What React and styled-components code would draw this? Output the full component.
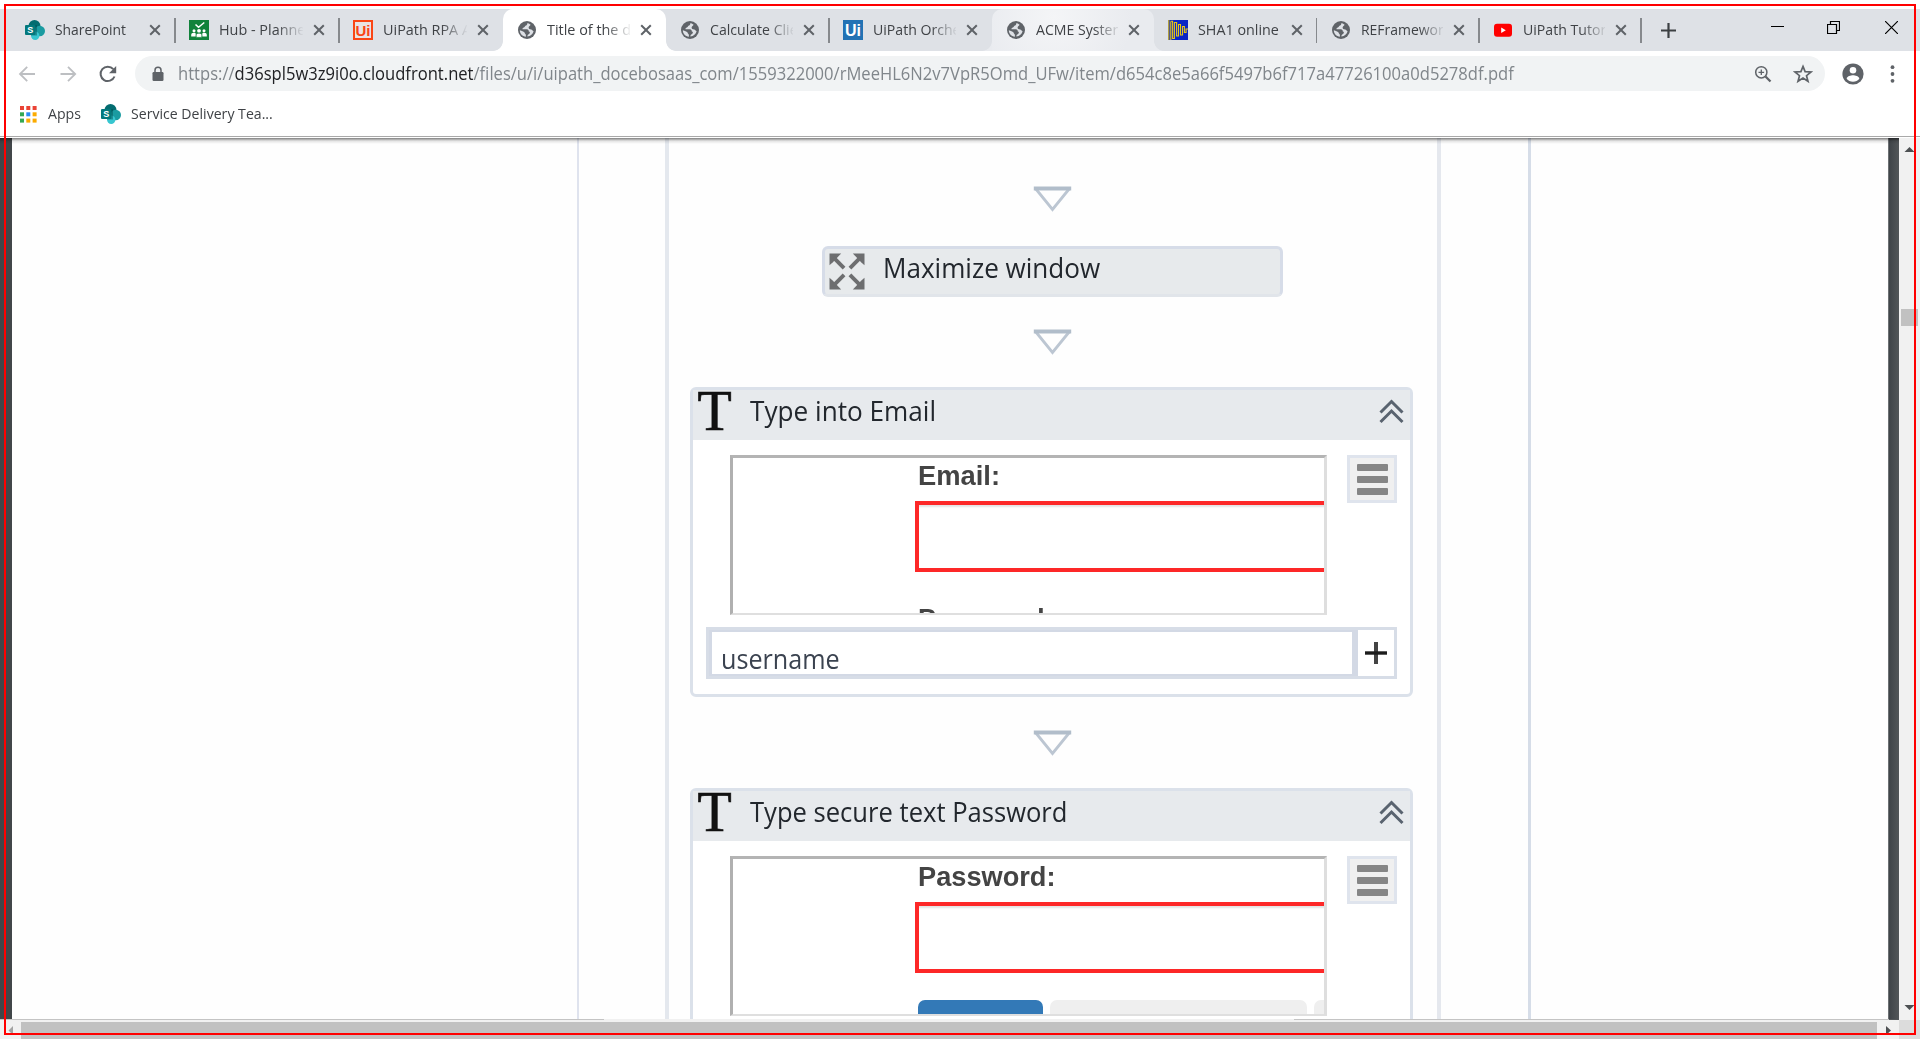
import React, { useLayoutEffect, useRef, useState } from "react";
import styled, { createGlobalStyle, css } from "styled-components";

const UI = `"Open Sans", "Noto Sans", sans-serif`;

const Global = createGlobalStyle`
  * { box-sizing: border-box; }
  html, body { margin: 0; padding: 0; overflow: hidden; }
  svg { display: block; flex: none; }
`;

/* ---------- text fitted to a given advance width ---------- */
const FitBox = styled.span`
  display: block;
  flex: none;
  width: ${(p) => p.$w}px;
  white-space: pre;
`;
const FitInner = styled.span`
  display: inline-block;
  transform-origin: 0 50%;
`;
function Fit({ w, children }) {
  const ref = useRef(null);
  const [k, setK] = useState(1);
  useLayoutEffect(() => {
    if (ref.current.offsetWidth) setK(w / ref.current.offsetWidth);
  }, [w]);
  return (
    <FitBox $w={w}>
      <FitInner ref={ref} style={{ transform: `scaleX(${k})` }}>{children}</FitInner>
    </FitBox>
  );
}

/* ---------- window ---------- */
const Window = styled.div`
  width: 1920px;
  height: 1039px;
  padding-top: 9px;
  display: flex;
  flex-direction: column;
  background: #fff;
  font-family: ${UI};
  overflow: hidden;
`;
const Frame = styled.div`
  position: absolute;
  left: 4px;
  top: 4px;
  width: 1912px;
  height: 1031px;
  border: 2px solid #f00;
  pointer-events: none;
  z-index: 10;
`;

/* ---------- tab strip ---------- */
const Strip = styled.div`
  flex: none;
  height: 42px;
  padding-left: 11px;
  display: flex;
  background: #dee1e6;
`;
const raised = (color, fill) => css`
  background: ${fill};
  border-radius: 10px 10px 0 0;
  &::before, &::after {
    content: "";
    position: absolute;
    bottom: 0;
    width: 10px;
    height: 10px;
  }
  &::before {
    left: -10px;
    background: radial-gradient(circle at 0 0, transparent 9.5px, ${color} 10.2px);
  }
  &::after {
    right: -10px;
    background: radial-gradient(circle at 100% 0, transparent 9.5px, ${color} 10.2px);
  }
`;
const TabBox = styled.div`
  position: relative;
  flex: none;
  width: ${(p) => p.$w}px;
  height: 42px;
  padding: 0 0 0 14px;
  display: flex;
  align-items: center;
  z-index: ${(p) => (p.$state ? 1 : 0)};
  ${(p) => p.$state === "active" && raised("#fff", "#fff")}
  ${(p) => p.$state === "hover" && raised("#e9ebef", "radial-gradient(circle 78px at 62px 8px, #f4f5f7, #e9ebef)")}
`;
const TabTitle = styled.div`
  width: ${(p) => p.$w - 80}px;
  margin: 0 10px 2px 10px;
  white-space: nowrap;
  font-size: 15px;
  line-height: 24px;
  color: #3f4246;
  ${(p) => p.$fade && css`mask-image: linear-gradient(90deg, #000 58px, transparent 85px);`}
`;
const TabText = styled.span`
  display: inline-block;
  transform: scaleX(${(p) => p.$k});
  transform-origin: 0 50%;
`;
const Separator = styled.i`
  width: 1.5px;
  height: 25px;
  margin-left: auto;
  margin-right: -0.5px;
  background: #86898d;
`;
const Controls = styled.div`
  display: flex;
  align-items: center;
  flex: 1;
  padding: 0 22px 6px 20px;
`;
const Push = styled.span`flex: 1;`;
const PlusWrap = styled.div`padding-top: 6px;`;
const Spacer = styled.span`flex: none; width: ${(p) => p.$w}px;`;

/* ---------- toolbar ---------- */
const Toolbar = styled.div`
  flex: none;
  height: 45px;
  padding: 0 22px 0 18px;
  display: flex;
  align-items: center;
`;
const Omnibox = styled.div`
  width: 1690px;
  height: 35px;
  margin-left: 18px;
  padding: 0 12px 0 17px;
  display: flex;
  align-items: center;
  border-radius: 18px;
  background: #f1f3f4;
`;
const Url = styled.div`
  margin: 0 0 2px 14px;
  font-size: 17.5px;
  line-height: 28px;
  color: #80868b;
`;
const Host = styled.span`color: #202124;`;

const Bookmarks = styled.div`
  flex: none;
  height: 40px;
  padding: 0 0 4px 20px;
  display: flex;
  align-items: center;
  font-size: 15px;
  line-height: 24px;
  color: #3f4246;
`;
const BookmarkLabel = styled.div`margin: 0 20px 2px ${(p) => p.$l}px;`;
const Edge = styled.div`
  flex: none;
  height: 2px;
  border-top: 1px solid #a9a9a9;
`;

/* ---------- viewer ---------- */
const Viewer = styled.div`
  position: relative;
  flex: none;
  height: 881px;
  display: flex;
  &::before {
    content: "";
    position: absolute;
    inset: 0 21px auto 0;
    height: 6px;
    background: linear-gradient(rgba(0,0,0,.5), rgba(0,0,0,.3) 25%, rgba(0,0,0,.1) 50%, transparent);
    z-index: 3;
  }
`;
const Gutter = styled.div`
  flex: none;
  width: ${(p) => p.$w}px;
  background: ${(p) => p.$bg};
`;
const Page = styled.div`
  flex: 1;
  height: 881px;
  padding-left: 565px;
  background: #fefefe;
  overflow: hidden;
`;
const Sequence = styled.div`
  width: 954px;
  height: 900px;
  padding-left: 86px;
  border-left: 2px solid #dfe3ee;
  border-right: 3px solid #d6dde8;
  filter: blur(0.7px);
`;
const Inner = styled.div`
  width: 775.5px;
  height: 900px;
  padding: 48px 24px 0 20.5px;
  border-left: 4px solid #e4e8ee;
  border-right: 4px solid #e5e8ee;
  display: flex;
  flex-direction: column;
  align-items: flex-start;
`;
const ArrowSlot = styled.div`
  flex: none;
  height: 25px;
  margin: 0 0 ${(p) => p.$b}px 343.5px;
`;
const Maximize = styled.div`
  flex: none;
  width: 461px;
  height: 51px;
  margin: 0 0 32px 132px;
  padding: 0 0 0 4px;
  display: flex;
  align-items: center;
  background: #e7eaec;
  border: 3px solid #d6dce8;
  border-bottom-color: #e1e5ea;
  border-radius: 6px;
`;
const Label = styled.div`
  margin-left: ${(p) => p.$l}px;
  margin-bottom: ${(p) => p.$b}px;
  font-size: 28px;
  line-height: 34px;
  color: #22272d;
`;
const Card = styled.div`
  flex: none;
  width: 723px;
  height: 310px;
  margin-bottom: 32.5px;
  border: 3px solid #dbe1ea;
  border-radius: 6px;
  background: #fff;
`;
const CardHead = styled.div`
  height: 50px;
  padding: 0 6px 0 5px;
  display: flex;
  align-items: center;
  background: #e7eaed;
`;
const Letter = styled.div`
  width: 35px;
  margin-bottom: 7px;
  font: 56px/43px "Liberation Serif", serif;
  -webkit-text-stroke: 0.7px #111;
  color: #111;
`;
const Toggle = styled.div`
  margin: 0 0 7px auto;
`;
const CardBody = styled.div`
  padding: 15px 0 0 37px;
  display: flex;
`;
const Shot = styled.div`
  width: 597px;
  height: 160px;
  padding-left: 182px;
  overflow: hidden;
  border: solid;
  border-width: 3px 3px 2px 3px;
  border-color: #b4b4b4 #dedede #dfdfdf #b0b0b0;
  background: #fff;
`;
const FieldName = styled.div`
  height: 36px;
  padding-top: 1px;
  margin-left: 3px;
  font: bold 27px/35px "Liberation Sans", Arial, sans-serif;
  color: #444;
`;
const RedField = styled.div`
  height: 71px;
  margin: 7px -3px ${(p) => p.$b}px 0;
  border: 4px solid #fd2828;
  border-right: 0;
  box-shadow: inset 0 3px 2px -1px #e3e3e3;
`;
const Buttons = styled.div`
  display: flex;
  gap: 7px;
  margin-left: 3px;
`;
const FormButton = styled.div`
  flex: none;
  width: ${(p) => p.$w}px;
  height: 40px;
  border-radius: 7px;
  background: ${(p) => p.$bg};
`;
const MenuButton = styled.div`
  width: 50px;
  height: 48px;
  margin-left: 20.5px;
  padding: 6px 0 0 7px;
  border: 3px solid #dfe4ed;
  background: #f0f0f0;
  display: flex;
  flex-direction: column;
  gap: 4.7px;
`;
const Bar = styled.i`
  width: 31px;
  height: 7.3px;
  border-radius: 1px;
  background: #868686;
`;
const InputRow = styled.div`
  width: 691px;
  height: 52px;
  margin: 12px 0 0 13px;
  display: flex;
  border: 3px solid #d7dde7;
  background: #fff;
`;
const Input = styled.div`
  flex: 1;
  padding: 8px 0 0 9px;
  border: solid #d3d9e5;
  border-width: 2px 6px 2px 3px;
  font-size: 27.5px;
  line-height: 37px;
  color: #3b4350;
`;
const AddCell = styled.div`
  width: 36px;
  display: flex;
  align-items: center;
  justify-content: center;
`;

/* ---------- scrollbars ---------- */
const VScroll = styled.div`
  flex: none;
  width: 21px;
  padding: 8px 0 8px 2px;
  display: flex;
  flex-direction: column;
  background: #f1f1f1;
`;
const VThumb = styled.div`
  width: 17px;
  height: 17px;
  margin-top: 156px;
  margin-bottom: auto;
  background: #c1c1c1;
`;
const HScroll = styled.div`
  flex: none;
  height: 20px;
  display: flex;
  background: #f1f1f1;
`;
const HTrack = styled.div`
  width: 1899px;
  padding: 3px 0 0 8px;
  display: flex;
  border-top: 1px solid transparent;
  border-image: linear-gradient(90deg, #c4c4c4 604px, #f1f1f1 604px, #f1f1f1 1294px, #c4c4c4 1294px, #c4c4c4 1888px, #525659 1888px) 1;
`;
const HThumb = styled.div`
  width: 1856px;
  height: 17px;
  margin: -1px 9px 0 8px;
  background: #c1c1c1;
`;
const Corner = styled.div`flex: 1; margin-top: 1px; background: #dcdcdc;`;

/* ---------- drawings ---------- */
const Close = () => (
  <svg width="12" height="12" viewBox="0 0 12 12" stroke="#5f6368" strokeWidth="2">
    <path d="M1.2 1.2 10.8 10.8M10.8 1.2 1.2 10.8" />
  </svg>
);
const letterProps = { fontFamily: '"Liberation Sans", sans-serif', fontWeight: "bold", textAnchor: "middle" };
const SharePoint = () => (
  <svg width="20" height="20" viewBox="0 0 20 20">
    <circle cx="9.5" cy="6" r="6" fill="#036c70" />
    <circle cx="14.7" cy="11" r="5.3" fill="#1a9ba1" />
    <circle cx="10.2" cy="15.8" r="4.2" fill="#37c6d0" />
    <path d="M5 5h7v10.5H6.2A4 4 0 0 1 5 12z" fill="#024a4d" opacity=".45" />
    <rect y="5" width="10.4" height="10" rx="1" fill="#03787c" />
    <text x="5.2" y="13.2" fontSize="9" fill="#fff" {...letterProps}>S</text>
  </svg>
);
const Hub = () => (
  <svg width="20" height="20" viewBox="0 0 20 20">
    <rect width="20" height="20" fill="#11823b" />
    <path d="m6.5 4.500 3 2.800L15.300 2.500" fill="none" stroke="#fff" strokeWidth="1.500" />
    <g fill="#fff">
      <circle cx="5" cy="10.800" r="1.500" /><circle cx="10" cy="10.800" r="1.900" /><circle cx="15" cy="10.800" r="1.500" />
      <path d="M2.200 16.500v-1.600c0-1.500 1-2.200 2.600-2.200s2 .5 2 1.500v2.300zM17.800 16.500v-1.600c0-1.500-1-2.200-2.600-2.200s-2 .5-2 1.500v2.300z" />
      <path d="M7.200 17.400v-2.200c0-1.400 1.200-2 2.800-2s2.800.6 2.800 2v2.200z" stroke="#11823b" strokeWidth=".7" />
    </g>
  </svg>
);
const UiOrange = () => (
  <svg width="20" height="20" viewBox="0 0 20 20">
    <rect x="1" y="1" width="18" height="18" fill="#e9e4e4" stroke="#fa4616" strokeWidth="2" />
    <text x="10" y="16" fontSize="15" fill="#fa4616" {...letterProps}>Ui</text>
  </svg>
);
const UiBlue = () => (
  <svg width="20" height="20" viewBox="0 0 20 20">
    <rect width="20" height="20" fill="#2272b4" />
    <text x="10" y="16" fontSize="16" fill="#fff" {...letterProps}>Ui</text>
  </svg>
);
const Globe = () => (
  <svg width="20" height="20" viewBox="0 0 20 20">
    <circle cx="10" cy="10" r="9" fill="#5f6368" />
    <path d="M10.500 3c-.4 1.300-.2 2.200-1.600 2.500-1.200.3-.8 1.700-2 1.900-1 .2-1.500.8-1.400 1.900h4.400c1.400 0 1.800.9 1.900 2.300 1.300.1 1.400 1.300.5 2.200-.9.8-2 1-1.900 2.600 3.200-.3 5.500-2.400 6.200-5.200-1.300-.2-1.200-1.300-2.500-1.600-1.500-.3-2.600-.6-2.500-2 .1-1.500 1.500-1.400 2-2.800A7 7 0 0 0 10.500 3z" fill="#dee1e6" />
    <path d="M2.800 10.200c1.500.3 3 .8 4.200 1.700.9.700.6 1.500 1.400 2.100.7.500.5 1.500.5 2.800-3.500-.6-6-3.100-6.100-6.600z" fill="#dee1e6" />
  </svg>
);
const Sha = () => (
  <svg width="20" height="20" viewBox="0 0 20 20">
    <rect width="20" height="20" fill="#0b25c4" />
    <path d="M.8 0v20M2.800 20V1.500M2.800 1.200h1.800v17.300h1.800V2.500h2.200v13.500h1.900V4.500h2v10.500h2V6.500h1.900v6h1.700V9H20" fill="none" stroke="#e8c614" strokeWidth="1.100" />
  </svg>
);
const YouTube = () => (
  <svg width="20" height="20" viewBox="0 0 20 20">
    <rect x="1" y="3.700" width="18" height="13" rx="3" fill="#f00" />
    <path d="m8.200 7.500 4.600 2.700-4.600 2.700z" fill="#fff" />
  </svg>
);
const Arrow = ({ flip }) => (
  <svg width="18" height="18" viewBox="0 0 18 18" fill="none" stroke="#bdbfc2" strokeWidth="1.800">
    <path d={flip ? "M1.500 9H16M9 1.800 16.200 9 9 16.200" : "M17 9H2.500M9.200 1.800 2 9l7.200 7.200"} />
  </svg>
);
const Reload = () => (
  <svg width="18" height="18" viewBox="0 0 18 18">
    <path d="M15.500 11.500A7.200 7.200 0 1 1 14.300 4.200" fill="none" stroke="#5f6368" strokeWidth="2" />
    <path d="M17.200 1v7.200H10z" fill="#5f6368" />
  </svg>
);
const Lock = () => (
  <svg width="12" height="16" viewBox="0 0 12 16">
    <rect x=".5" y="6" width="11" height="9" rx="1.200" fill="#5f6368" />
    <path d="M3 6.500V4.200a3 3 0 0 1 6 0v2.300" fill="none" stroke="#5f6368" strokeWidth="1.500" />
  </svg>
);
const Zoom = () => (
  <svg width="18" height="18" viewBox="0 0 18 18" fill="none" stroke="#5f6368">
    <circle cx="7.300" cy="7.300" r="5.600" strokeWidth="1.500" />
    <path d="m11.500 11.500 5 5" strokeWidth="2.300" />
    <path d="M4.500 7.300h5.600M7.300 4.500v5.600" strokeWidth="1.300" />
  </svg>
);
const Star = () => (
  <svg width="20" height="20" viewBox="0 0 20 20" fill="none" stroke="#5f6368" strokeWidth="1.700">
    <path d="m10 2.400 2.100 5.200 5.900.4-4.500 3.700 1.500 5.600-5-3.200-5 3.200 1.500-5.600L2 8l5.900-.4z" />
  </svg>
);
const Avatar = () => (
  <svg width="22" height="22" viewBox="0 0 22 22">
    <circle cx="11" cy="11" r="10.600" fill="#5f6368" />
    <circle cx="11" cy="7.300" r="3.300" fill="#fff" />
    <path d="M4.700 15.700c0-2.300 4.200-3.400 6.300-3.400s6.300 1.100 6.300 3.400c-1.400 1.900-3.700 3-6.300 3s-4.900-1.100-6.300-3z" fill="#fff" />
  </svg>
);
const Dots = () => (
  <svg width="5" height="18" viewBox="0 0 5 18" fill="#5f6368">
    <circle cx="2.500" cy="2.200" r="1.900" /><circle cx="2.500" cy="9" r="1.900" /><circle cx="2.500" cy="15.800" r="1.900" />
  </svg>
);
const AppsIcon = () => {
  const c = ["#ea4335", "#ea4335", "#ea4335", "#34a853", "#2a8cf4", "#fbab00", "#34a853", "#fbab00", "#fbab00"];
  return (
    <svg width="17" height="17" viewBox="0 0 17 17">
      {c.map((f, i) => <rect key={i} x={(i % 3) * 6.3} y={Math.floor(i / 3) * 6.3} width="4" height="4" fill={f} />)}
    </svg>
  );
};
const DownArrow = () => (
  <svg width="39" height="26" viewBox="0 0 39 26">
    <path d="M2.500 2.500 19.500 23.500 36.500 2.500" fill="none" stroke="#bcc6d2" strokeWidth="2.800" />
    <path d="M.8 2.500h37.400" stroke="#b1bdca" strokeWidth="4.200" />
  </svg>
);
const Expand = () => (
  <svg width="36" height="37" viewBox="0 0 37 38" fill="#6d6e70" stroke="#6d6e70">
    {[[1, 1], [-1, 1], [1, -1], [-1, -1]].map(([x, y], i) => (
      <g key={i} transform={`translate(${x > 0 ? 0 : 37} ${y > 0 ? 0 : 38}) scale(${x} ${y})`}>
        <path d="M.5.5h12l-3.200 3.400L4 9.500.5 12.500z" stroke="none" />
        <path d="m5 5 10.500 10.500" strokeWidth="4" />
      </g>
    ))}
  </svg>
);
const Chevrons = () => (
  <svg width="25" height="25" viewBox="0 0 25 25" fill="none" stroke="#59636f" strokeWidth="3">
    <path d="m1.500 13.500 11-11 11 11M1.500 23l11-11 11 11" />
  </svg>
);
const Tri = ({ d, w, h, fill = "#4d5052" }) => (
  <svg width={w} height={h} viewBox={`0 0 ${w} ${h}`}><path d={d} fill={fill} /></svg>
);

/* ---------- parts ---------- */
const TABS = [
  { w: 164, icon: SharePoint, title: "SharePoint", k: 0.925, sep: true },
  { w: 164, icon: Hub, title: "Hub - Planne", k: 0.96, fade: true, sep: true },
  { w: 163.5, icon: UiOrange, title: "UiPath RPA A", k: 0.96, fade: true },
  { w: 163.5, icon: Globe, title: "Title of the d", k: 0.96, fade: true, state: "active" },
  { w: 163, icon: Globe, title: "Calculate Clie", k: 0.94, fade: true, sep: true },
  { w: 163, icon: UiBlue, title: "UiPath Orche", k: 0.94, fade: true },
  { w: 162, icon: Globe, title: "ACME Syster", k: 0.94, fade: true, state: "hover" },
  { w: 162.5, icon: Sha, title: "SHA1 online", k: 0.955, sep: true },
  { w: 162.5, icon: Globe, title: "REFramewor", k: 0.93, fade: true, sep: true },
  { w: 162, icon: YouTube, title: "UiPath Tutor", k: 0.94, fade: true, sep: true },
];

function Tab({ w, icon: Icon, title, k, fade, sep, state }) {
  return (
    <TabBox $w={w} $state={state}>
      <Icon />
      <TabTitle $w={w} $fade={fade}><TabText $k={k}>{title}</TabText></TabTitle>
      <Close />
      {sep && <Separator />}
    </TabBox>
  );
}

function Activity({ title, titleW, field, fieldW, next, value, buttons }) {
  return (
    <Card>
      <CardHead>
        <Letter>T</Letter>
        <Label $l={17} $b={11}><Fit w={titleW}>{title}</Fit></Label>
        <Toggle><Chevrons /></Toggle>
      </CardHead>
      <CardBody>
        <Shot>
          <FieldName><Fit w={fieldW}>{field}</Fit></FieldName>
          <RedField $b={buttons ? 27 : 29} />
          {next && <FieldName><Fit w={127}>{next}</Fit></FieldName>}
          {buttons && (
            <Buttons>
              <FormButton $w={125.5} $bg="#3379b7" />
              <FormButton $w={257} $bg="#efefef" />
              <FormButton $w={60} $bg="#efefef" />
            </Buttons>
          )}
        </Shot>
        <MenuButton><Bar /><Bar /><Bar /></MenuButton>
      </CardBody>
      {value && (
        <InputRow>
          <Input><Fit w={119}>{value}</Fit></Input>
          <AddCell>
            <svg width="22" height="22" viewBox="0 0 22 22">
              <path d="M11 0v22" stroke="#444" strokeWidth="4" />
              <path d="M0 11h22" stroke="#1c1c1c" strokeWidth="3.400" />
            </svg>
          </AddCell>
        </InputRow>
      )}
    </Card>
  );
}

export default function App() {
  return (
    <Window>
      <Global />
      <Strip>
        {TABS.map((t) => <Tab key={t.title} {...t} />)}
        <Controls>
          <PlusWrap>
            <svg width="15" height="15" viewBox="0 0 15 15" stroke="#3c4043" strokeWidth="2.200"><path d="M7.500 0v15M0 7.500h15" /></svg>
          </PlusWrap>
          <Push />
          <svg width="13" height="13" viewBox="0 0 13 13"><path d="M0 5.500h13" stroke="#000" strokeWidth="1" /></svg>
          <Spacer $w={43} />
          <svg width="13" height="13" viewBox="0 0 13 13" fill="none" stroke="#000"><path d="M.5 3.500h9v9h-9zM3.500 3.500v-3h9v9h-3" strokeWidth="1.200" /></svg>
          <Spacer $w={45} />
          <svg width="13" height="13" viewBox="0 0 13 13" stroke="#000" strokeWidth="1.200"><path d="m0 0 13 13M13 0 0 13" /></svg>
        </Controls>
      </Strip>
      <Toolbar>
        <Arrow /><Spacer $w={22.5} /><Arrow flip /><Spacer $w={22.5} /><Reload />
        <Omnibox>
          <Lock />
          <Url>
            <Fit w={1336}>https://<Host>d36spl5w3z9i0o.cloudfront.net</Host>/files/u/i/uipath_docebosaas_com/1559322000/rMeeHL6N2v7VpR5Omd_UFw/item/d654c8e5a66f5497b6f717a47726100a0d5278df.pdf</Fit>
          </Url>
          <Push />
          <Zoom /><Spacer $w={21} /><Star />
        </Omnibox>
        <Spacer $w={17} /><Avatar />
        <Push />
        <Dots />
        <Spacer $w={3} />
      </Toolbar>
      <Bookmarks>
        <AppsIcon />
        <BookmarkLabel $l={11}><Fit w={33}>Apps</Fit></BookmarkLabel>
        <SharePoint />
        <BookmarkLabel $l={10}><Fit w={142}>Service Delivery Tea...</Fit></BookmarkLabel>
      </Bookmarks>
      <Edge />
      <Viewer>
        <Gutter $w={12} $bg="#414649" />
        <Page>
          <Sequence>
            <Inner>
              <ArrowSlot $b={34.5}><DownArrow /></ArrowSlot>
              <Maximize>
                <Expand />
                <Label $l={18} $b={8}><Fit w={217}>Maximize window</Fit></Label>
              </Maximize>
              <ArrowSlot $b={33.5}><DownArrow /></ArrowSlot>
              <Activity title="Type into Email" titleW={186} field="Email:" fieldW={82} next="Password" value="username" />
              <ArrowSlot $b={33.5}><DownArrow /></ArrowSlot>
              <Activity title="Type secure text Password" titleW={317} field="Password:" fieldW={138} buttons />
            </Inner>
          </Sequence>
        </Page>
        <Gutter $w={11} $bg="linear-gradient(90deg, #6c7073 1px, #3f4448 1px, #525659)" />
        <VScroll>
          <Tri w={17} h={7} d="M3.500 6h10L8.500 1z" />
          <VThumb />
          <Tri w={17} h={7} d="M3.500 1h10L8.500 6z" />
        </VScroll>
      </Viewer>
      <HScroll>
        <HTrack>
          <Tri w={5} h={14} d="M5 3v9L.5 7.500z" fill="#a3a3a3" />
          <HThumb />
          <Tri w={5} h={14} d="M0 3v9L5 7.500z" />
        </HTrack>
        <Corner />
      </HScroll>
      <Frame />
    </Window>
  );
}
